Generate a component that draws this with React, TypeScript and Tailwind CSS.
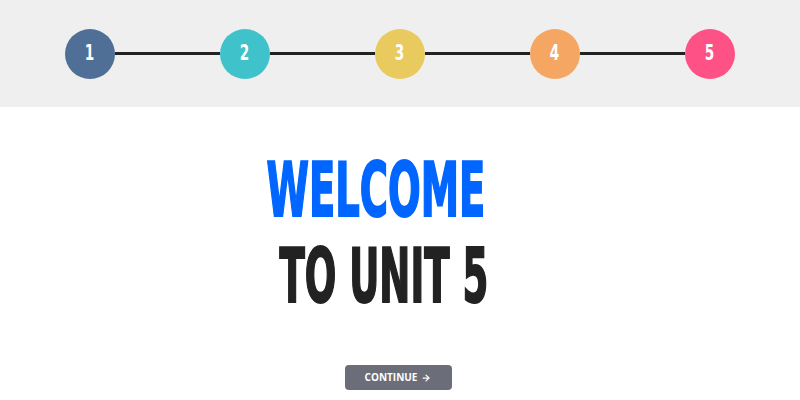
import { ArrowRight } from 'lucide-react'

const STEPS = [
  { n: 1, color: 'bg-[#4f6f96]' },
  { n: 2, color: 'bg-[#3fc2ca]' },
  { n: 3, color: 'bg-[#e9ca5f]' },
  { n: 4, color: 'bg-[#f5a663]' },
  { n: 5, color: 'bg-[#fe5287]' },
]

const display = "font-['DejaVu_Sans_Condensed','DejaVu_Sans',sans-serif] font-bold [font-stretch:condensed]"

export default function App() {
  return (
    <div className="w-[800px] h-[400px] bg-white flex flex-col overflow-hidden">
      {/* Progress */}
      <div className="h-[107px] bg-[#efefef] flex items-center px-[65px]">
        {STEPS.map((s, i) => (
          <div key={s.n} className={`flex items-center ${i < STEPS.length - 1 ? 'flex-1' : ''}`}>
            <div className={`w-[50px] h-[50px] rounded-full ${s.color} flex items-center justify-center shrink-0`}>
              <span className={`${display} text-white text-[21px] leading-none inline-block scale-x-[0.72]`}>{s.n}</span>
            </div>
            {i < STEPS.length - 1 && <div className="flex-1 h-[3px] bg-[#222222]" />}
          </div>
        ))}
      </div>

      {/* Title */}
      <div className="flex flex-col items-center pr-[48px] pt-[40px]">
        <div className={`${display} text-[75px] leading-[86px] text-[#0066ff] inline-block scale-x-[0.57] whitespace-nowrap [-webkit-text-stroke:2px_#0066ff]`}>
          WELCOME
        </div>
        <div className={`${display} text-[75px] leading-[86px] text-[#222222] inline-block scale-x-[0.55] whitespace-nowrap ml-[16px] [-webkit-text-stroke:2px_#222222]`}>
          TO UNIT 5
        </div>
      </div>

      {/* Continue */}
      <div className="flex justify-center mt-auto mb-[10px] pr-[4px]">
        <button className="w-[107px] h-[25px] rounded-[4px] bg-[#6b6e78] text-white flex items-center justify-center gap-[4px] font-['Open_Sans',sans-serif] font-bold text-[10px]">
          CONTINUE
          <ArrowRight size={10} strokeWidth={3} />
        </button>
      </div>
    </div>
  )
}
